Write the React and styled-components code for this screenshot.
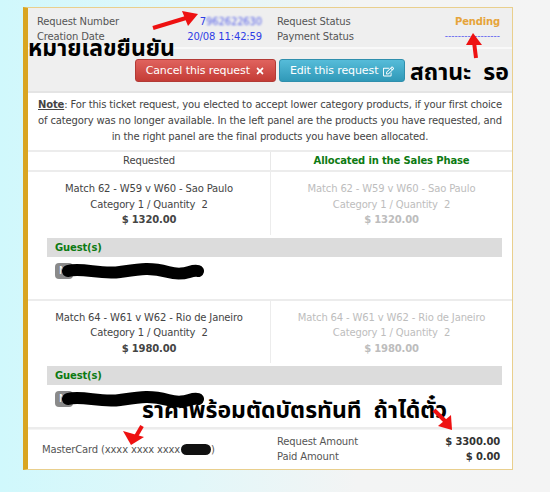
import styled, { createGlobalStyle } from "styled-components";
import { FaTimes, FaRegEdit } from "react-icons/fa";

const GlobalStyle = createGlobalStyle`
  html, body {
    margin: 0;
    padding: 0;
  }
  body {
    width: 550px;
    height: 492px;
    overflow: hidden;
    background: linear-gradient(90deg, #d0f8fc 0%, #e2f7f9 35%, #f3f4f4 65%, #f4f4f4 100%);
    font-family: "DejaVu Sans", Verdana, sans-serif;
  }
`;

const items = [
  {
    title: "Match 62 - W59 v W60 - Sao Paulo",
    detail: "Category 1 / Quantity\u00a0 2",
    price: "$ 1320.00",
  },
  {
    title: "Match 64 - W61 v W62 - Rio de Janeiro",
    detail: "Category 1 / Quantity\u00a0 2",
    price: "$ 1980.00",
  },
];

export default function App() {
  return (
    <Page>
      <GlobalStyle />
      <Card>
        <Header>
          <InfoGrid>
            <InfoCol>
              <InfoRow>
                <Label>Request Number</Label>
                <Value>
                  7<Blurred>962622630</Blurred>
                </Value>
              </InfoRow>
              <InfoRow>
                <Label>Creation Date</Label>
                <Value>20/08 11:42:59</Value>
              </InfoRow>
            </InfoCol>
            <InfoCol>
              <InfoRow>
                <Label>Request Status</Label>
                <Value className="pending">Pending</Value>
              </InfoRow>
              <InfoRow>
                <Label>Payment Status</Label>
                <Value className="dashes">-----------------</Value>
              </InfoRow>
            </InfoCol>
          </InfoGrid>
          <Actions>
            <Button $variant="danger">
              Cancel this request <FaTimes size={10} />
            </Button>
            <Button $variant="info">
              Edit this request <FaRegEdit size={11} />
            </Button>
          </Actions>
        </Header>

        <Note>
          <b>Note</b>: For this ticket request, you elected to accept lower category products, if your first choice
          <br />
          of category was no longer available. In the left panel are the products you have requested, and
          <br />
          in the right panel are the final products you have been allocated.
        </Note>

        <TableHead>
          <HeadCell>Requested</HeadCell>
          <HeadCell $green>Allocated in the Sales Phase</HeadCell>
        </TableHead>

        {items.map((item) => (
          <ItemBlock key={item.title}>
            <ItemRow>
              <ItemCell>
                <div>{item.title}</div>
                <div>{item.detail}</div>
                <Price>{item.price}</Price>
              </ItemCell>
              <ItemCell $faded>
                <div>{item.title}</div>
                <div>{item.detail}</div>
                <Price>{item.price}</Price>
              </ItemCell>
            </ItemRow>
            <GuestBar>Guest(s)</GuestBar>
            <GuestList>
              <GuestTag>
                <Badge>N</Badge>
                <Scribble width="142" height="22" viewBox="0 0 142 22">
                  <path
                    d="M6 11 C 20 7, 38 15, 58 12 S 88 7, 106 12 S 128 9, 136 11"
                    stroke="#000"
                    strokeWidth="12"
                    fill="none"
                    strokeLinecap="round"
                  />
                </Scribble>
              </GuestTag>
            </GuestList>
          </ItemBlock>
        ))}

        <Footer>
          <CardInfo>
            MasterCard (xxxx xxxx xxxx<Blob />)
          </CardInfo>
          <Totals>
            <InfoRow>
              <Label>Request Amount</Label>
              <Amount>$ 3300.00</Amount>
            </InfoRow>
            <InfoRow>
              <Label>Paid Amount</Label>
              <Amount>$ 0.00</Amount>
            </InfoRow>
          </Totals>
        </Footer>
      </Card>

      <Annotation $size={23} style={{ left: 28, top: 34 }}>หมายเลขยืนยัน</Annotation>
      <Annotation $size={23} style={{ left: 410, top: 58 }}>สถานะ&nbsp; รอ</Annotation>
      <Annotation $size={23} style={{ left: 142, top: 396 }}>ราคาพร้อมตัดบัตรทันที&nbsp; ถ้าได้ตั๋ว</Annotation>

      <Arrow style={{ left: 150, top: 10 }} width="50" height="22" viewBox="0 0 50 22">
        <line x1="3" y1="18" x2="36" y2="8" stroke="#ee1111" strokeWidth="4" />
        <polygon points="48,4 32,1 38,16" fill="#ee1111" />
      </Arrow>
      <Arrow style={{ left: 466, top: 33 }} width="18" height="26" viewBox="0 0 18 26">
        <line x1="10" y1="25" x2="8" y2="9" stroke="#ee1111" strokeWidth="4" />
        <polygon points="7,0 0,12 16,12" fill="#ee1111" />
      </Arrow>
      <Arrow style={{ left: 122, top: 424 }} width="26" height="22" viewBox="0 0 26 22">
        <line x1="20" y1="2" x2="13" y2="14" stroke="#ee1111" strokeWidth="4" />
        <polygon points="9,21 1,7 22,13" fill="#ee1111" />
      </Arrow>
      <Arrow style={{ left: 432, top: 408 }} width="24" height="24" viewBox="0 0 24 24">
        <line x1="2" y1="2" x2="14" y2="14" stroke="#ee1111" strokeWidth="4" />
        <polygon points="20,22 6,18 19,7" fill="#ee1111" />
      </Arrow>
    </Page>
  );
}

const Page = styled.div`
  position: relative;
  width: 550px;
  height: 492px;
  padding: 7px 0 0 23px;
  box-sizing: border-box;
`;

const Card = styled.div`
  width: 490px;
  box-sizing: border-box;
  background: #fff;
  border: 1px solid #e9cf8d;
  border-left: 5px solid #d9a521;
  color: #444;
  font-size: 10px;
  letter-spacing: -0.15px;
`;

const Header = styled.div`
  background: #efefef;
  border-bottom: 2px solid #e4e4e4;
`;

const InfoGrid = styled.div`
  display: grid;
  grid-template-columns: 225px 223px;
  column-gap: 15px;
  padding: 6px 12px 3px 9px;
  border-bottom: 2px solid #f9f9f9;
`;

const InfoCol = styled.div`
  display: flex;
  flex-direction: column;
`;

const InfoRow = styled.div`
  display: flex;
  justify-content: space-between;
  align-items: center;
  line-height: 15px;
`;

const Label = styled.span`
  color: #555;
`;

const Value = styled.span`
  color: #2f3de6;
  &.pending {
    color: #e6a43a;
    font-weight: bold;
  }
  &.dashes {
    letter-spacing: 0;
    color: #5050f0;
    font-size: 9px;
  }
`;

const Blurred = styled.span`
  filter: blur(1.2px);
  opacity: 0.8;
`;

const Actions = styled.div`
  display: flex;
  justify-content: center;
  gap: 3px;
  padding: 10px 0 9px;
`;

const Button = styled.button`
  display: flex;
  align-items: center;
  gap: 5px;
  height: 23px;
  padding: 0 10px;
  font-family: "DejaVu Sans", Verdana, sans-serif;
  font-size: 11px;
  letter-spacing: -0.1px;
  color: #fff;
  border-radius: 3px;
  border: 1px solid ${(p) => (p.$variant === "danger" ? "#b33a35" : "#2f8fad")};
  background: ${(p) =>
    p.$variant === "danger"
      ? "linear-gradient(#e0635e, #c43c36)"
      : "linear-gradient(#56bcd9, #3099b8)"};
  svg {
    margin-top: 1px;
  }
`;

const Note = styled.p`
  margin: 0;
  padding: 4px 2px 5px;
  text-align: center;
  line-height: 16px;
  white-space: nowrap;
  color: #444;
  b {
    text-decoration: underline;
  }
`;

const TableHead = styled.div`
  display: grid;
  grid-template-columns: 242px 1fr;
  border-top: 2px solid #ececec;
  border-bottom: 2px solid #ececec;
`;

const HeadCell = styled.div`
  text-align: center;
  line-height: 18px;
  color: ${(p) => (p.$green ? "#0d7a12" : "#444")};
  font-weight: ${(p) => (p.$green ? "bold" : "normal")};
  & + & {
    border-left: 1px solid #e8e8e8;
  }
`;

const ItemBlock = styled.div`
  border-bottom: 2px solid #ececec;
`;

const ItemRow = styled.div`
  display: grid;
  grid-template-columns: 242px 1fr;
`;

const ItemCell = styled.div`
  text-align: center;
  line-height: 15.5px;
  padding: 9px 0 7px;
  color: ${(p) => (p.$faded ? "#bdbdbd" : "#444")};
  & + & {
    border-left: 1px solid #ececec;
  }
`;

const Price = styled.div`
  font-weight: bold;
`;

const GuestBar = styled.div`
  margin: 3px 10px 0 19px;
  background: #dcdcdc;
  height: 19px;
  line-height: 19px;
  padding-left: 8px;
  color: #0d7a12;
  font-weight: bold;
`;

const GuestList = styled.div`
  padding: 3px 0 17px 27px;
  height: 22px;
`;

const GuestTag = styled.div`
  position: relative;
  display: inline-block;
  height: 22px;
`;

const Badge = styled.span`
  display: inline-block;
  width: 18px;
  box-sizing: border-box;
  background: #8a8a8a;
  color: #fff;
  border-radius: 4px;
  font-size: 10px;
  line-height: 16px;
  padding-left: 4px;
  margin-top: 3px;
`;

const Scribble = styled.svg`
  position: absolute;
  left: 7px;
  top: 0;
`;

const Footer = styled.div`
  display: grid;
  grid-template-columns: 226px 223px;
  column-gap: 9px;
  align-items: center;
  padding: 4px 12px 5px 14px;
  border-top: 1px solid #f4f4f4;
`;

const CardInfo = styled.div`
  display: flex;
  align-items: center;
  color: #555;
`;

const Blob = styled.span`
  display: inline-block;
  width: 30px;
  height: 11px;
  border-radius: 6px;
  background: #111;
  margin-left: 1px;
`;

const Totals = styled.div`
  display: flex;
  flex-direction: column;
`;

const Amount = styled.span`
  font-weight: bold;
  color: #333;
`;

const Annotation = styled.div`
  position: absolute;
  font-family: "Noto Sans Thai", "Noto Sans", "DejaVu Sans", sans-serif;
  font-size: ${(p) => p.$size}px;
  font-weight: bold;
  color: #000;
  white-space: nowrap;
  line-height: 30px;
`;

const Arrow = styled.svg`
  position: absolute;
`;
